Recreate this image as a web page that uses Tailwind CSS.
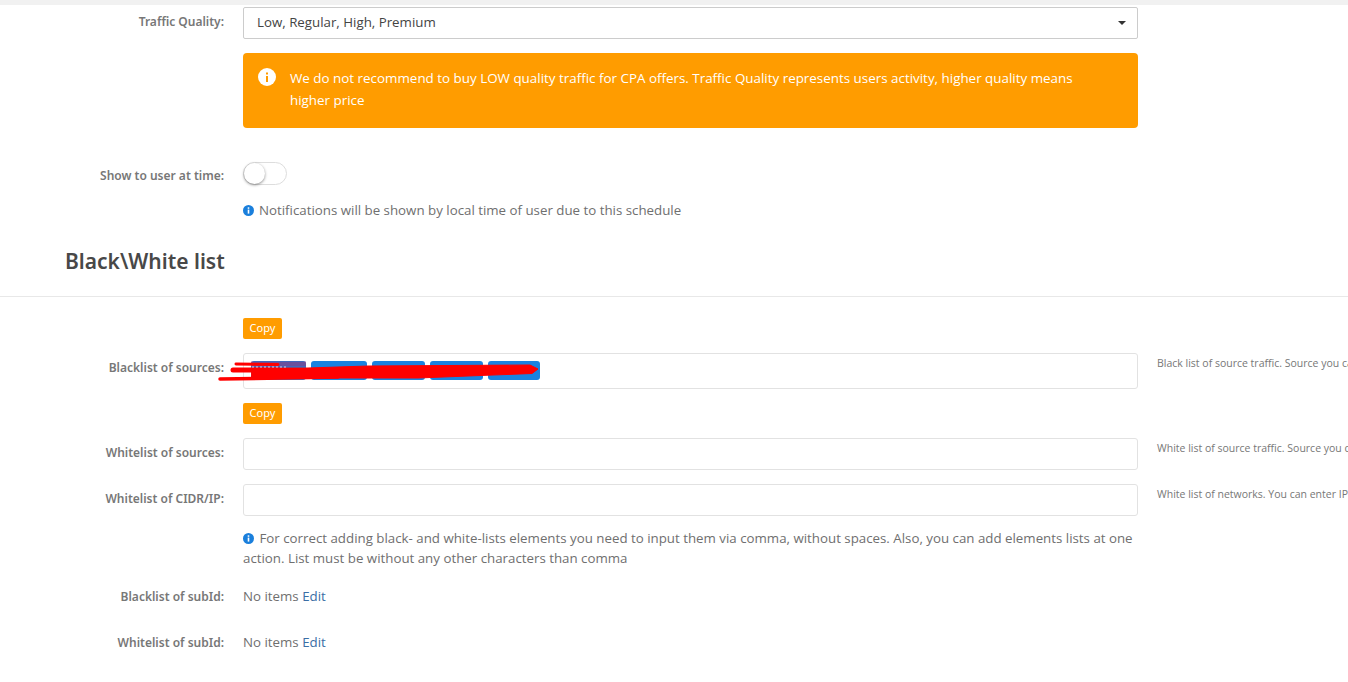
<!DOCTYPE html>
<html lang="en">
<head>
    <meta charset="UTF-8">
    <title>Black/White list settings</title>
    <script src="https://cdn.jsdelivr.net/npm/@tailwindcss/browser@4"></script>
</head>
<body class="bg-white font-['Open_Sans',sans-serif] text-[13.3px] text-[#6f6f6f]">
    <div class="relative h-[682px] overflow-hidden">
        <div class="h-[5px] bg-[#f1f1f1]"></div>

        <!-- Traffic quality -->
        <div class="mt-[2px] flex">
            <label class="w-[224px] shrink-0 pt-[6px] text-right font-['Noto_Sans',sans-serif] text-[12px] font-semibold text-[#777]">Traffic Quality:</label>
            <div class="ml-[19px] w-[895px] shrink-0">
                <div class="flex h-[32px] items-center justify-between rounded-[2px] border border-[#ccc] pb-[1px] pl-[13px] pr-[11px] text-[#444]">
                    <span>Low, Regular, High, Premium</span>
                    <span class="h-0 w-0 border-x-[4px] border-t-[4px] border-x-transparent border-t-[#333]"></span>
                </div>
                <div class="mt-[14px] flex h-[75px] rounded-[4px] bg-[#ff9c00] pl-[15px] pr-[50px] pt-[14px] text-[13.4px] text-white">
                    <svg class="mt-[1px] h-[18px] w-[18px] shrink-0" viewBox="0 0 18 18">
                        <circle cx="9" cy="9" r="9" fill="#fff"/>
                        <rect x="8" y="8" width="2" height="6" fill="#ff9c00"/>
                        <rect x="8" y="4.5" width="2" height="2" fill="#ff9c00"/>
                    </svg>
                    <p class="ml-[14px] leading-[22px]">We do not recommend to buy LOW quality traffic for CPA offers. Traffic Quality represents users activity, higher quality means higher price</p>
                </div>
            </div>
        </div>

        <!-- Show to user at time -->
        <div class="mt-[34px] flex">
            <label class="w-[224px] shrink-0 pt-[5px] text-right font-['Noto_Sans',sans-serif] text-[12px] font-semibold text-[#777]">Show to user at time:</label>
            <div class="ml-[19px]">
                <div class="h-[23px] w-[44px] rounded-full border border-[#ddd] bg-white">
                    <div class="h-[21px] w-[21px] rounded-full bg-white shadow-[0_1px_3px_rgba(0,0,0,0.45)]"></div>
                </div>
                <p class="mt-[16px] flex items-center leading-[18px]">
                    <svg class="mr-[5px] h-[11px] w-[11px]" viewBox="0 0 11 11">
                        <circle cx="5.5" cy="5.5" r="5.5" fill="#1a7fdc"/>
                        <rect x="4.7" y="4.6" width="1.6" height="4" fill="#fff"/>
                        <rect x="4.7" y="2.3" width="1.6" height="1.5" fill="#fff"/>
                    </svg>
                    Notifications will be shown by local time of user due to this schedule
                </p>
            </div>
        </div>

        <h2 class="mt-[28px] pl-[65px] font-['Noto_Sans',sans-serif] text-[21px] font-semibold leading-[28px] text-[#484848]">Black\White list</h2>
        <div class="mt-[21px] h-px bg-[#e8e8e8]"></div>

        <!-- Blacklist of sources -->
        <div class="mt-[21px] pl-[243px]">
            <button class="block h-[21px] w-[39px] rounded-[2px] bg-[#ff9c00] pb-[1px] font-['Noto_Sans',sans-serif] text-[11px] text-white">Copy</button>
        </div>
        <div class="mt-[14px] flex">
            <label class="w-[224px] shrink-0 pt-[6px] text-right font-['Noto_Sans',sans-serif] text-[12px] font-semibold text-[#777]">Blacklist of sources:</label>
            <div class="ml-[19px] flex h-[36px] w-[895px] shrink-0 items-center gap-[5px] rounded-[3px] border border-[#e2e2e2] pb-[1px] pl-[7px]">
                <span class="h-[19px] w-[55px] rounded-[3px] bg-[#1a83e0]"></span>
                <span class="h-[19px] w-[56px] rounded-[3px] bg-[#1a83e0]"></span>
                <span class="h-[19px] w-[53px] rounded-[3px] bg-[#1a83e0]"></span>
                <span class="h-[19px] w-[53px] rounded-[3px] bg-[#1a83e0]"></span>
                <span class="h-[19px] w-[52px] rounded-[3px] bg-[#1a83e0]"></span>
            </div>
            <p class="ml-[19px] whitespace-nowrap pt-[3px] text-[10.5px] text-[#777]">Black list of source traffic. Source you can enter here</p>
        </div>

        <!-- Whitelist of sources -->
        <div class="mt-[14px] pl-[243px]">
            <button class="block h-[21px] w-[39px] rounded-[2px] bg-[#ff9c00] pb-[1px] font-['Noto_Sans',sans-serif] text-[11px] text-white">Copy</button>
        </div>
        <div class="mt-[14px] flex">
            <label class="w-[224px] shrink-0 pt-[6px] text-right font-['Noto_Sans',sans-serif] text-[12px] font-semibold text-[#777]">Whitelist of sources:</label>
            <div class="ml-[19px] h-[32px] w-[895px] shrink-0 rounded-[3px] border border-[#e2e2e2]"></div>
            <p class="ml-[19px] whitespace-nowrap pt-[3px] text-[10.5px] text-[#777]">White list of source traffic. Source you can enter here</p>
        </div>

        <!-- Whitelist of CIDR -->
        <div class="mt-[14px] flex">
            <label class="w-[224px] shrink-0 pt-[6px] text-right font-['Noto_Sans',sans-serif] text-[12px] font-semibold text-[#777]">Whitelist of CIDR/IP:</label>
            <div class="ml-[19px] h-[32px] w-[895px] shrink-0 rounded-[3px] border border-[#e2e2e2]"></div>
            <p class="ml-[19px] whitespace-nowrap pt-[3px] text-[10.5px] text-[#777]">White list of networks. You can enter IP addresses here</p>
        </div>

        <p class="ml-[243px] mt-[12px] w-[900px] leading-[20px]">
            <svg class="mr-[2px] inline-block h-[11px] w-[11px] align-[-1px]" viewBox="0 0 11 11">
                <circle cx="5.5" cy="5.5" r="5.5" fill="#1a7fdc"/>
                <rect x="4.7" y="4.6" width="1.6" height="4" fill="#fff"/>
                <rect x="4.7" y="2.3" width="1.6" height="1.5" fill="#fff"/>
            </svg>
            For correct adding black- and white-lists elements you need to input them via comma, without spaces. Also, you can add elements lists at one action. List must be without any other characters than comma
        </p>

        <!-- subId lists -->
        <div class="mt-[20px] flex h-[18px] items-center">
            <label class="w-[224px] shrink-0 text-right font-['Noto_Sans',sans-serif] text-[12px] font-semibold text-[#777]">Blacklist of subId:</label>
            <p class="ml-[19px]">No items <a class="text-[#3b6ea5]">Edit</a></p>
        </div>
        <div class="mt-[28px] flex h-[18px] items-center">
            <label class="w-[224px] shrink-0 text-right font-['Noto_Sans',sans-serif] text-[12px] font-semibold text-[#777]">Whitelist of subId:</label>
            <p class="ml-[19px]">No items <a class="text-[#3b6ea5]">Edit</a></p>
        </div>

        <!-- red scribble over the blacklist tags -->
        <svg class="absolute left-[218px] top-[358px] h-[26px] w-[330px]" viewBox="0 0 330 26" fill="none" stroke="#ff0000" stroke-linecap="round">
            <path d="M33 6 L88 6" stroke="#a03070" stroke-opacity="0.6" stroke-width="5" stroke-linecap="butt"/>
            <path d="M18 6 L60 6.5" stroke-width="3"/>
            <path d="M15 12 L60 12" stroke-width="5"/>
            <path d="M34 10 L90 10 L150 8 L312 7 L320 11 L314 15.5 L250 18 L200 20 L34 20 Z" fill="#ff0000" stroke-width="1" stroke-linejoin="round"/>
            <path d="M2 21 L120 19" stroke-width="3.5"/>
            <path d="M34 9 L68 9" stroke="#e6c4dc" stroke-width="1" stroke-dasharray="2 2" stroke-linecap="butt"/>
        </svg>
    </div>
</body>
</html>
